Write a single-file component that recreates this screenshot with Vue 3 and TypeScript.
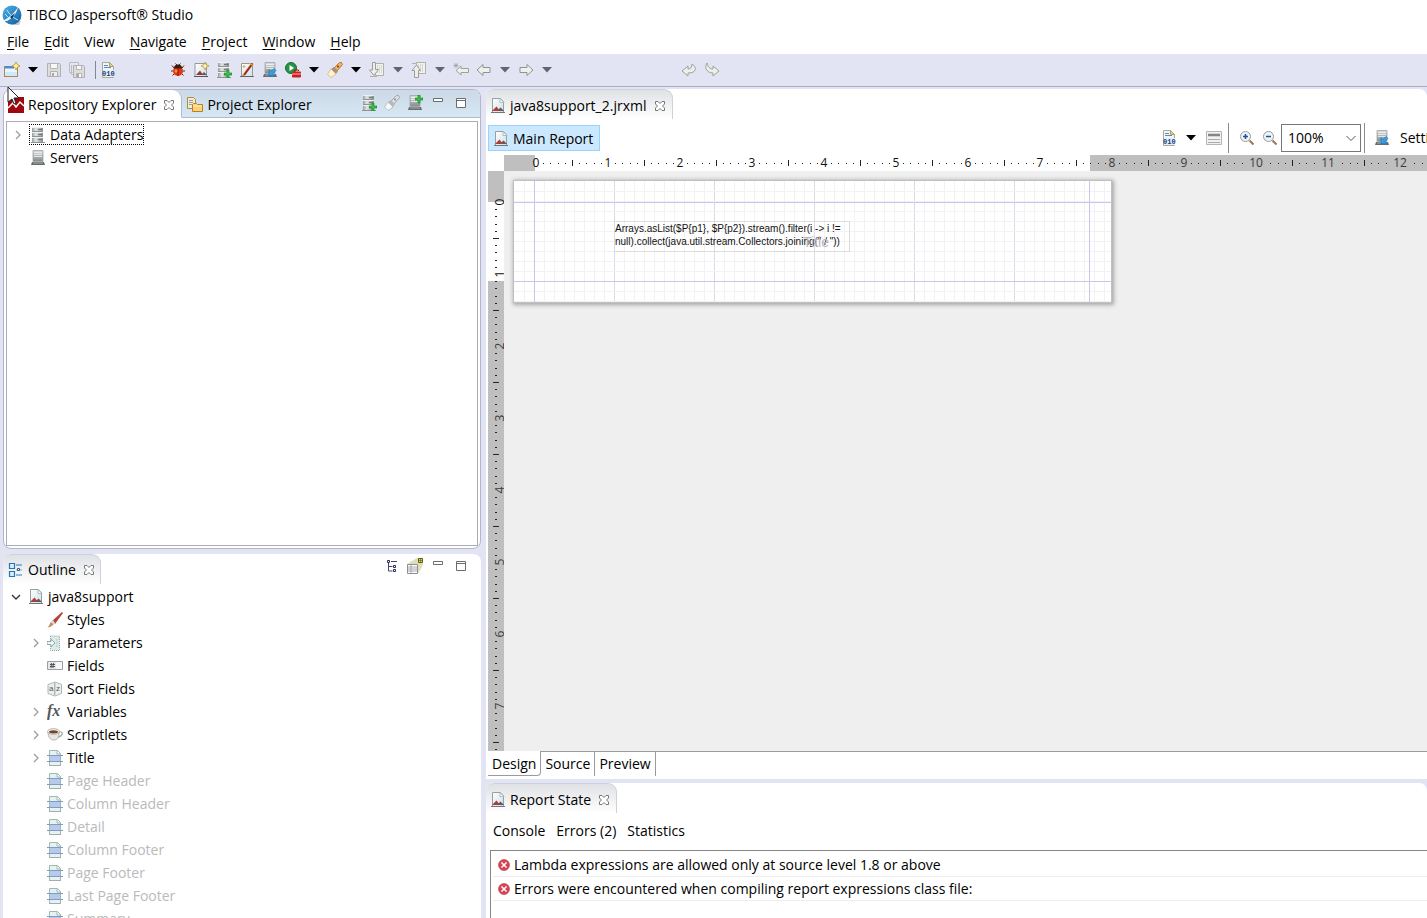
<script setup lang="ts">
import { onBeforeUnmount, onMounted, ref, computed } from 'vue'

interface Tool { kind: 'icon' | 'menu' | 'sep' | 'gap' | 'wide'; icon?: string; label?: string; off?: boolean }
interface Node { label: string; icon: string; child?: boolean; off?: boolean }

const menus = [
  { label: 'File', key: true },
  { label: 'Edit', key: true },
  { label: 'View', key: false },
  { label: 'Navigate', key: true },
  { label: 'Project', key: true },
  { label: 'Window', key: true },
  { label: 'Help', key: true },
]

const tools: Tool[] = [
  { kind: 'icon', icon: 'new', label: 'New' },
  { kind: 'menu', label: 'New menu' },
  { kind: 'icon', icon: 'save', label: 'Save', off: true },
  { kind: 'icon', icon: 'saveall', label: 'Save All', off: true },
  { kind: 'sep' },
  { kind: 'icon', icon: 'binary', label: 'Compile' },
  { kind: 'gap' },
  { kind: 'icon', icon: 'bug', label: 'Debug' },
  { kind: 'icon', icon: 'newreport', label: 'New Report' },
  { kind: 'icon', icon: 'dbadd', label: 'New Data Adapter' },
  { kind: 'icon', icon: 'wand', label: 'New Style' },
  { kind: 'icon', icon: 'serverlink', label: 'Publish' },
  { kind: 'icon', icon: 'run', label: 'Run' },
  { kind: 'menu', label: 'Run menu' },
  { kind: 'icon', icon: 'torch', label: 'Search' },
  { kind: 'menu', label: 'Search menu' },
  { kind: 'icon', icon: 'nextnote', label: 'Next Annotation', off: true },
  { kind: 'menu', label: 'Next Annotation menu', off: true },
  { kind: 'icon', icon: 'prevnote', label: 'Previous Annotation', off: true },
  { kind: 'menu', label: 'Previous Annotation menu', off: true },
  { kind: 'icon', icon: 'lastedit', label: 'Last Edit Location', off: true },
  { kind: 'icon', icon: 'back', label: 'Back', off: true },
  { kind: 'menu', label: 'Back menu', off: true },
  { kind: 'icon', icon: 'forward', label: 'Forward', off: true },
  { kind: 'menu', label: 'Forward menu', off: true },
  { kind: 'wide' },
  { kind: 'icon', icon: 'undo', label: 'Undo', off: true },
  { kind: 'icon', icon: 'redo', label: 'Redo', off: true },
]

const outline: Node[] = [
  { label: 'Styles', icon: 'brush' },
  { label: 'Parameters', icon: 'param', child: true },
  { label: 'Fields', icon: 'field' },
  { label: 'Sort Fields', icon: 'sort' },
  { label: 'Variables', icon: 'fx', child: true },
  { label: 'Scriptlets', icon: 'cup', child: true },
  { label: 'Title', icon: 'band', child: true },
  { label: 'Page Header', icon: 'band', off: true },
  { label: 'Column Header', icon: 'band', off: true },
  { label: 'Detail', icon: 'band', off: true },
  { label: 'Column Footer', icon: 'band', off: true },
  { label: 'Page Footer', icon: 'band', off: true },
  { label: 'Last Page Footer', icon: 'band', off: true },
  { label: 'Summary', icon: 'band', off: true },
]

const errors = [
  'Lambda expressions are allowed only at source level 1.8 or above',
  'Errors were encountered when compiling report expressions class file:',
]

const views = ['Design', 'Source', 'Preview']
const view = ref('Design')
const zoom = ref('100%')

// One ruler unit is an inch: 72 pixels at 100% zoom.
const INCH = 72
const range = (n: number) => Array.from({ length: Math.max(n, 0) }, (_, i) => i)
const marksFor = (units: number[]) =>
  units.flatMap((u) =>
    [1, 2, 3, 4, 5, 6, 7, 8, 9]
      .filter((k) => !(u >= 10 && k === 1) && !(u >= 9 && k === 9))
      .map((k) => ({ at: Math.round(u * INCH + (k * INCH) / 10), half: k === 5 })),
  )

const design = ref<HTMLElement>()
const size = ref({ w: 920, h: 596 })
const across = computed(() => range(Math.ceil((size.value.w - 56) / INCH)))
const down = computed(() => range(Math.ceil((size.value.h - 56) / INCH)))
const marksAcross = computed(() => marksFor(across.value))
const marksDown = computed(() => marksFor(down.value))

function measure() {
  if (design.value) size.value = { w: design.value.clientWidth, h: design.value.clientHeight }
}
onMounted(() => {
  measure()
  window.addEventListener('resize', measure)
})
onBeforeUnmount(() => window.removeEventListener('resize', measure))
</script>

<template>
  <svg class="sprite" aria-hidden="true">
    <defs>
      <linearGradient id="gBall" x1="0" y1="0" x2="1" y2="1"><stop offset="0" stop-color="#4db4ec" /><stop offset="1" stop-color="#145a9c" /></linearGradient>
      <linearGradient id="gSteel" x1="0" x2="1" y1="0" y2="0"><stop offset="0" stop-color="#989c9d" /><stop offset=".35" stop-color="#e3e6e6" /><stop offset="1" stop-color="#85898a" /></linearGradient>
      <linearGradient id="gServer" x1="0" x2="0" y1="0" y2="1"><stop offset="0" stop-color="#dadedf" /><stop offset="1" stop-color="#85898c" /></linearGradient>
      <linearGradient id="gPage" x1="0" x2="1" y1="0" y2="1"><stop offset="0" stop-color="#ffffff" /><stop offset="1" stop-color="#cfdfe2" /></linearGradient>
    </defs>
    <symbol id="logo" viewBox="0 0 20 20"><path d="M11 17l8-1-2 4H9z" fill="#c9c9c9" /><circle cx="10" cy="10" r="9.5" fill="url(#gBall)" /><path d="M1 16C6 13 12 9 16 2c-1 6-5 11-11 14z" fill="#e8f6ff" /><path d="M5 5c2 4 6 8 11 10M3 9l5 5" stroke="#bfe4fa" stroke-width="1" fill="none" /><path d="M8 12l5-4-3 6z" fill="#08365f" /></symbol>
    <symbol id="new" viewBox="0 0 16 16"><rect x=".5" y="4.500" width="13" height="10" fill="#eaf5fd" stroke="#a28d55" /><path d="M1 4h9v2.500H1z" fill="#4a8cd6" /><path d="M1 10h12v4H1z" fill="#d2e8f8" /><path d="M12 0l1.300 2.700L16 4l-2.700 1.300L12 8l-1.300-2.700L8 4l2.700-1.300z" fill="#fff3a5" stroke="#bd8b1e" stroke-width=".8" /></symbol>
    <symbol id="save" viewBox="0 0 16 16"><path d="M1.500 1.500h12l1 1v12h-13z" fill="#dcdcdb" stroke="#b0b1b2" /><path d="M4.500 1.500h7v5h-7z" fill="#f7f7f7" stroke="#b5b5b5" /><path d="M4.500 9.500h7v5h-7z" fill="#eee" stroke="#b0b0b0" /><path d="M6 11h2v3H6z" fill="#a8a8a8" /></symbol>
    <symbol id="saveall" viewBox="0 0 16 16"><path d="M.5.5h9v3M.5.5v10h3M2.500 3v9.500h2" fill="#e8e8e8" stroke="#bbb" /><path d="M4.500 3.500h10l1 1v11h-11z" fill="#dcdcdb" stroke="#b0b1b2" /><path d="M7.500 4v3.500h5V4M7.500 15v-3.500h5V15" fill="#f8f8f8" stroke="#b5b5b5" /><path d="M8 12h2v3H8z" fill="#a8a8a8" /></symbol>
    <symbol id="binary" viewBox="0 0 16 16"><path d="M2.500.5h7l4 4v11h-11z" fill="#eef4fb" stroke="#a9ad94" /><path d="M9.500.5v4h4z" fill="#e4d38f" stroke="#b3a15b" /><path d="M4 3.500h4M4 5.500h7" stroke="#6688bd" /><path d="M3 8h11v7H3z" fill="#e6eef8" /></symbol>
    <symbol id="bug" viewBox="0 0 16 16"><path d="M4 6L2 3.500M12 6l2-2.500M3 9H1M13 9h2M4 12l-1.500 1.500M12 12l1.500 1.500M7 3L5.500 1.500M9 3l1.500-1.500" stroke="#6e2211" /><ellipse cx="8" cy="9" rx="5" ry="5" fill="#e03a0c" /><path d="M4 6.500a4 4 0 018 0z" fill="#3c1a12" /><path d="M8 7v7" stroke="#7c1902" /><ellipse cx="6" cy="9" rx="1.500" ry="1.800" fill="#ff8b4a" /></symbol>
    <symbol id="report" viewBox="0 0 16 16"><path d="M2.500.5h8l3 3v11h-11z" fill="url(#gPage)" stroke="#8fa3a6" /><path d="M10 .5v4h4z" fill="#f5fafa" stroke="#9cb4b1" stroke-width=".8" /><path d="M2 13l4.500-4.500L10 13z" fill="#b33a3a" /><path d="M7 13l3.500-3.500L14 13z" fill="#6f5157" /><path d="M1 14.500h14" stroke="#6f7778" /></symbol>
    <symbol id="newreport" viewBox="0 0 16 16"><path d="M2 1.500h11.500v13H2z" fill="url(#gPage)" stroke="#8f9b9e" /><path d="M3 13l4-4.500 3 4.500z" fill="#9a3540" /><path d="M8 13l3-3 3 3z" fill="#6f5157" /><path d="M1 14.500h14" stroke="#555" /><path d="M12 0l1.200 2.800L16 4l-2.800 1.200L12 8l-1.200-2.800L8 4l2.800-1.200z" fill="#fff4b0" stroke="#b98c2b" stroke-width=".7" /></symbol>
    <symbol id="db" viewBox="0 0 16 16"><rect x="2" y="0" width="11" height="5" fill="url(#gSteel)" /><rect x="2" y="5" width="11" height="5" fill="url(#gSteel)" /><rect x="2" y="10" width="11" height="5" fill="url(#gSteel)" /><path d="M2 4.500h11M2 9.500h11" stroke="#8f9495" /><path d="M2 .5h11M2 5.500h11M2 10.500h11" stroke="#eff1f1" /><path d="M8 2.500h4M8 7.500h4M8 12.500h4" stroke="#747a7b" /><path d="M1 15.500h14" stroke="#8d9293" /></symbol>
    <symbol id="plus" viewBox="0 0 16 16"><path d="M3 0h2v3h3v2H5v3H3V5H0V3h3z" fill="#32c843" stroke="#14772a" stroke-width=".6" /></symbol>
    <symbol id="dbadd" viewBox="0 0 16 16"><use href="#db" width="16" height="16" /><use href="#plus" x="8" y="8" width="16" height="16" /></symbol>
    <symbol id="wand" viewBox="0 0 16 16"><path d="M2.500 1.500h11v13h-11z" fill="url(#gPage)" stroke="#919b9c" /><path d="M4 12.500L12.500 1l2 1L6 13.500z" fill="#a92c1d" /><path d="M2 15l2-3 2 1.500z" fill="#d39555" /><path d="M10.500 1.500l3.500 2M5 3v3M3.500 4.500h3" stroke="#e3b540" stroke-width="1.200" /><path d="M1 14.500h14" stroke="#525657" stroke-width=".8" /></symbol>
    <symbol id="server" viewBox="0 0 16 16"><path d="M3 .5h10v11H3z" fill="url(#gServer)" stroke="#a0a4a5" stroke-width=".8" /><path d="M4 2.500h8M4 4.500h8M4 6.500h8" stroke="#f4f5f5" stroke-width=".8" /><path d="M2 12h12l1 3H1z" fill="#676c6f" /><path d="M3 13h10" stroke="#a8adaf" /></symbol>
    <symbol id="serverlink" viewBox="0 0 16 16"><use href="#server" width="16" height="16" /><path d="M7 7.500v6h6l-2-2 3-3-2-2-3 3z" fill="#2fa2ea" stroke="#0d67b1" stroke-width=".5" /></symbol>
    <symbol id="serveradd" viewBox="0 0 16 16"><use href="#server" width="16" height="16" /><use href="#plus" x="8" y="0" width="16" height="16" /></symbol>
    <symbol id="run" viewBox="0 0 16 16"><circle cx="6" cy="6" r="5.500" fill="#239545" stroke="#14702c" /><path d="M4.500 3l4.500 3-4.500 3z" fill="#fff" /><rect x="7" y="9.500" width="9" height="6" rx="1" fill="#cf1e1e" /><path d="M9.500 9V8h4v1" fill="none" stroke="#a01212" /><path d="M7 12h9" stroke="#fff" stroke-width=".7" /></symbol>
    <symbol id="torch" viewBox="0 0 16 16"><path d="M7 6l5.500-5.500h2l1 2L10 9z" fill="#f5b35a" stroke="#a86623" stroke-width=".8" /><path d="M4 7l3-2 4 4-2 3z" fill="#a39089" /><path d="M.5 12L4 7l5 5-5 3.500z" fill="#fff3cd" stroke="#d2ad65" stroke-width=".7" /><circle cx="11" cy="4.500" r="1" fill="#6c3d13" /></symbol>
    <symbol id="torchoff" viewBox="0 0 16 16"><path d="M7 6l5.500-5.500h2l1 2L10 9z" fill="#dde1e2" stroke="#929798" stroke-width=".8" /><path d="M4 7l3-2 4 4-2 3z" fill="#b6babb" /><path d="M.5 12L4 7l5 5-5 3.500z" fill="#f7f8f8" stroke="#aaafb0" stroke-width=".7" /><circle cx="11" cy="4.500" r="1" fill="#888" /></symbol>
    <symbol id="nextnote" viewBox="0 0 16 16"><path d="M6.500 1.500h8v12h-8z" fill="#f2f2ed" stroke="#b0b0ad" /><path d="M8 4h5M8 6h5M8 8h5M8 10h5" stroke="#bbb" stroke-dasharray="1 1" /><path d="M3.500.5h3v7h3L5 13.500.5 8h3z" fill="#eeeeea" stroke="#9c9c99" /><path d="M1 14.500h7" stroke="#b0b0ad" /></symbol>
    <symbol id="prevnote" viewBox="0 0 16 16"><path d="M5.500.5h9v11h-9z" fill="#f2f2ed" stroke="#b0b0ad" /><path d="M7 3h6M7 5h6M7 7h6M7 9h6" stroke="#bbb" stroke-dasharray="1 1" /><path d="M3.500 15.500h4v-7h2L5.500 3 1 8.500h2.500z" fill="#eeeeea" stroke="#9c9c99" /><path d="M1 1.500h5" stroke="#b0b0ad" /></symbol>
    <symbol id="back" viewBox="0 0 16 16"><path d="M1 8l6-5.500v3h7v5H7v3z" fill="#f0f0ea" stroke="#929290" /></symbol>
    <symbol id="forward" viewBox="0 0 16 16"><path d="M15 8L9 2.500v3H2v5h7v3z" fill="#f0f0ea" stroke="#929290" /></symbol>
    <symbol id="lastedit" viewBox="0 0 16 16"><path d="M3 8.500L8 4v2.500h7.500v4H8V13z" fill="#f0f0ea" stroke="#a0a09d" /><path d="M3 1v5M.5 3.500h5M1 1.500l4 4M5 1.500l-4 4" stroke="#999" stroke-width=".7" /></symbol>
    <symbol id="undo" viewBox="0 0 16 16"><path d="M1 9l6-5v3c3 0 4-2 4-5 5 3 5 9-4 9v3z" fill="#efefe9" stroke="#a1a19e" /></symbol>
    <symbol id="redo" viewBox="0 0 16 16"><path d="M15 9L9 4v3C6 7 4 5 3 1c-3 5 0 10 6 10v3z" fill="#efefe9" stroke="#a1a19e" /></symbol>
    <symbol id="repo" viewBox="0 0 16 16"><path d="M0 0h16v16H0z" fill="#9f0710" /><path d="M0 11l5-5 3 4 4-5 4 4" fill="none" stroke="#fff" stroke-width="1.500" /><path d="M0 5l4-4" stroke="#d54c50" /></symbol>
    <symbol id="folder" viewBox="0 0 16 16"><path d="M.5.5h6l2 2v9h-8z" fill="#f5ebc6" stroke="#b08b48" /><path d="M2 3.500h4M2 5.500h4M2 7.500h3" stroke="#8fa0be" /><path d="M5.500 7.500l1-1h3l1 1h5v7h-10z" fill="#fbd278" stroke="#b6802a" /><path d="M6 9h9" stroke="#fff0bd" /></symbol>
    <symbol id="outline" viewBox="0 0 16 16"><path d="M1.500 1.500h5v5h-5zM1.500 9.500h5v5h-5z" fill="#d9edfb" stroke="#2478b5" stroke-width="1.200" /><path d="M8 3h6M8 13h6" stroke="#2478b5" /><path d="M8 8h6" stroke="#76a9cf" /><path d="M9.500 6.500h2v2h-2z" fill="#fff" stroke="#2a5c93" /></symbol>
    <symbol id="close" viewBox="0 0 12 12"><path d="M1.500 1.500H4l2 2 2-2h2.500V4l-2 2 2 2v2.500H8l-2-2-2 2H1.500V8l2-2-2-2z" fill="#fff" stroke="#777" /></symbol>
    <symbol id="min" viewBox="0 0 12 12"><path d="M1.500 1.500h9v3h-9z" fill="#fff" stroke="#6a6d70" /></symbol>
    <symbol id="max" viewBox="0 0 12 12"><path d="M1.500 1.500h9v9h-9zM1 3.500h10" fill="#fff" stroke="#6a6d70" /></symbol>
    <symbol id="treeview" viewBox="0 0 16 16"><path d="M4.500 5v8h4M4.500 8.500h4M7 3.500h6" stroke="#44456f" fill="none" /><path d="M3.500 2.500h2v2h-2zM9.500 7.500h2v2h-2zM9.500 11.500h2v2h-2z" fill="#fff" stroke="#272c63" /></symbol>
    <symbol id="preview" viewBox="0 0 16 16"><path d="M0 6L10 0h6v7l-5 9z" fill="#dcdfbe" /><path d="M.5 6.500h10v9H.5z" fill="#fff" stroke="#8d8f91" /><path d="M1 9h9M1 11h9M1 13h9M4 7v8" stroke="#a5a7a9" /><path d="M11.500.5h4v4h-4z" fill="#e7dc46" stroke="#5f5b1c" /><path d="M13.500 1v3M12 2.500h3" stroke="#5f5b1c" stroke-width=".6" /></symbol>
    <symbol id="brush" viewBox="0 0 16 16"><path d="M5 9L15 0l1 1-8 11z" fill="#b4443b" /><path d="M4 10l2-2 2 3-2 2z" fill="#d9d9d9" /><path d="M0 15.500C3 14 2 12 4 10l2.500 2.500C4 15 3 15 0 15.500z" fill="#c38f5d" /></symbol>
    <symbol id="param" viewBox="0 0 16 16"><path d="M3.500 1h9v14.500h-9z" fill="#dceae8" stroke="#8fa9a7" stroke-dasharray="1 1" /><path d="M0 6.500h4V4l4 4-4 4V9.500H0z" fill="#f2f6f6" stroke="#89a3a3" stroke-width=".9" /><path d="M9 5h2M9 8h2M9 11h2" stroke="#b4c6c4" /></symbol>
    <symbol id="field" viewBox="0 0 16 16"><path d="M.5 3.500h15v8H.5z" fill="#e5e8ea" stroke="#9aa0a2" /><path d="M9 4h6v7H9z" fill="#f8f8f8" /><path d="M4.500 5L4 10M6.500 5L6 10M3 6.500h5M3 8.500h5" stroke="#494d50" stroke-width=".9" /></symbol>
    <symbol id="sort" viewBox="0 0 16 16"><path d="M1 3.500L8 1l6.500 2.500v9L8 15l-7-2.500z" fill="#edf0f0" stroke="#aeb4b5" /><path d="M7.800 2v12" stroke="#999" /></symbol>
    <symbol id="cup" viewBox="0 0 16 16"><path d="M1 5c0 5 2 8 6 8s5-3 5-8z" fill="#e8e7e3" stroke="#a5a4a0" stroke-width=".8" /><ellipse cx="6.500" cy="4.500" rx="6" ry="2.800" fill="#f7f6f1" stroke="#a19e99" stroke-width=".8" /><ellipse cx="6.500" cy="4.800" rx="4.500" ry="1.600" fill="#744423" /><path d="M12 5c5-1 4 4-1 5" fill="none" stroke="#b0afab" stroke-width="1.300" /></symbol>
    <symbol id="band" viewBox="0 0 16 16"><path d="M2.500.5h8l3 3v12h-11z" fill="#e6f1f0" stroke="#9cb9b2" /><path d="M10 1v3h3.500" fill="#fff" stroke="#89aca2" stroke-width=".8" /><path d="M3 6h10v5H3z" fill="#b7c9ec" /><path d="M0 5.500h16M0 11.500h16" stroke="#7f9cc4" /><path d="M2 15.500h12" stroke="#a0adb2" /></symbol>
    <symbol id="error" viewBox="0 0 12 12"><circle cx="6" cy="6" r="5.500" fill="#d94351" stroke="#c05a60" stroke-width=".8" /><path d="M3.500 3.500l5 5M8.500 3.500l-5 5" stroke="#fff" stroke-width="1.500" /></symbol>
    <symbol id="form" viewBox="0 0 16 16"><path d="M.5 1.500h15v13H.5z" fill="#f0f1f1" stroke="#b4b5b5" /><path d="M2 5h12" stroke="#858585" stroke-width="2.500" /><path d="M2 9.500h12M2 12.500h12" stroke="#aaa" /></symbol>
    <symbol id="zoomin" viewBox="0 0 16 16"><circle cx="6.500" cy="6.500" r="5" fill="#edf4fc" stroke="#9b9b91" /><path d="M10.500 10.500l4 4" stroke="#94785a" stroke-width="2" /><path d="M6.500 4v5M4 6.500h5" stroke="#2450a0" stroke-width="1.600" /></symbol>
    <symbol id="zoomout" viewBox="0 0 16 16"><circle cx="6.500" cy="6.500" r="5" fill="#edf4fc" stroke="#9b9b91" /><path d="M10.500 10.500l4 4" stroke="#94785a" stroke-width="2" /><path d="M4 6.500h5" stroke="#2450a0" stroke-width="1.600" /></symbol>
    <symbol id="down" viewBox="0 0 10 6"><path d="M0 0h10L5 5.500z" fill="currentColor" /></symbol>
    <symbol id="closed" viewBox="0 0 10 10"><path d="M3 1l4 4-4 4" fill="none" stroke="#9d9d9d" stroke-width="1.300" /></symbol>
    <symbol id="opened" viewBox="0 0 10 10"><path d="M1 3l4 4 4-4" fill="none" stroke="#3f3f3f" stroke-width="1.500" /></symbol>
    <symbol id="chevron" viewBox="0 0 10 10"><path d="M.5 3L5 7.500 9.500 3" fill="none" stroke="#555" /></symbol>
  </svg>

  <div class="app">
    <header class="title"><svg class="logo"><use href="#logo" /></svg><span>TIBCO Jaspersoft® Studio</span></header>
    <nav class="menu">
      <button v-for="m in menus" :key="m.label"><template v-if="m.key"><u>{{ m.label[0] }}</u>{{ m.label.slice(1) }}</template><template v-else>{{ m.label }}</template></button>
    </nav>
    <div class="toolbar">
      <template v-for="(t, i) in tools" :key="i">
        <button v-if="t.kind === 'icon'" class="tool" :aria-label="t.label" :disabled="t.off">
          <svg class="i16"><use :href="'#' + t.icon" /><text v-if="t.icon === 'binary'" class="bits" x="2" y="14">010</text></svg>
        </button>
        <button v-else-if="t.kind === 'menu'" class="drop" :aria-label="t.label" :disabled="t.off"><svg class="caret"><use href="#down" /></svg></button>
        <span v-else :class="t.kind"></span>
      </template>
    </div>

    <main class="body">
      <div class="left">
        <section class="pane repo">
          <div class="tabs blue">
            <button class="tab current"><svg class="i16"><use href="#repo" /></svg>Repository Explorer<svg class="i12"><use href="#close" /></svg></button>
            <button class="tab"><svg class="i16"><use href="#folder" /></svg>Project Explorer</button>
            <div class="actions">
              <button aria-label="Create Data Adapter"><svg class="i16"><use href="#dbadd" /></svg></button>
              <button aria-label="Search"><svg class="i16"><use href="#torchoff" /></svg></button>
              <button aria-label="Create Server"><svg class="i16"><use href="#serveradd" /></svg></button>
              <button aria-label="Minimize"><svg class="i12"><use href="#min" /></svg></button>
              <button aria-label="Maximize"><svg class="i12"><use href="#max" /></svg></button>
            </div>
          </div>
          <ul class="tree boxed">
            <li><svg class="twist"><use href="#closed" /></svg><span class="focus"><svg class="i16"><use href="#db" /></svg>Data Adapters</span></li>
            <li><span class="twist"></span><span class="plain"><svg class="i16"><use href="#server" /></svg>Servers</span></li>
          </ul>
        </section>

        <section class="pane outline">
          <div class="tabs">
            <button class="tab gray"><svg class="i16"><use href="#outline" /></svg>Outline<svg class="i12"><use href="#close" /></svg></button>
            <div class="actions">
              <button aria-label="Outline"><svg class="i16"><use href="#treeview" /></svg></button>
              <button aria-label="Preview"><svg class="i16"><use href="#preview" /></svg></button>
              <button aria-label="Minimize"><svg class="i12"><use href="#min" /></svg></button>
              <button aria-label="Maximize"><svg class="i12"><use href="#max" /></svg></button>
            </div>
          </div>
          <ul class="tree">
            <li><svg class="twist"><use href="#opened" /></svg><span class="plain"><svg class="i16"><use href="#report" /></svg>java8support</span></li>
            <li v-for="n in outline" :key="n.label" class="sub" :class="{ off: n.off }">
              <svg class="twist"><use v-if="n.child" href="#closed" /></svg>
              <span class="plain">
                <svg class="i16">
                  <text v-if="n.icon === 'fx'" class="fx" x="0" y="12">fx</text>
                  <use v-else :href="'#' + n.icon" />
                  <template v-if="n.icon === 'sort'"><text class="az" x="2" y="10">a</text><text class="az" x="9" y="10">z</text></template>
                </svg>{{ n.label }}
              </span>
            </li>
          </ul>
        </section>
      </div>

      <div class="right">
        <section class="pane editor">
          <div class="tabs">
            <button class="tab gray"><svg class="i16"><use href="#report" /></svg>java8support_2.jrxml<svg class="i12"><use href="#close" /></svg></button>
          </div>
          <div class="bar">
            <button class="crumb"><svg class="i16"><use href="#report" /></svg>Main Report</button>
            <div class="bartools">
              <button class="tool" aria-label="Compile Report"><svg class="i16"><use href="#binary" /><text class="bits" x="2" y="14">010</text></svg></button>
              <button class="drop" aria-label="Compile menu"><svg class="caret"><use href="#down" /></svg></button>
              <button class="tool" aria-label="Dataset"><svg class="i16"><use href="#form" /></svg></button>
              <span class="line"></span>
              <button class="tool" aria-label="Zoom In"><svg class="i16"><use href="#zoomin" /></svg></button>
              <button class="tool" aria-label="Zoom Out"><svg class="i16"><use href="#zoomout" /></svg></button>
              <label class="zoom">
                <select v-model="zoom" aria-label="Zoom level"><option>100%</option><option>200%</option></select>
                <svg class="chev"><use href="#chevron" /></svg>
              </label>
              <span class="line"></span>
              <button class="settings"><svg class="i16"><use href="#serverlink" /></svg>Settings</button>
            </div>
          </div>
          <div ref="design" class="design">
            <svg class="hruler">
              <rect width="100%" height="16" fill="#bfbfbf" />
              <rect x="31" width="555" height="16" fill="#fff" />
              <g transform="translate(32 0)">
                <rect v-for="m in marksAcross" :key="m.at" :x="m.at" :y="m.half ? 5 : 8" width="1" :height="m.half ? 6 : 1" fill="#222" />
                <text v-for="u in across" :key="u" :x="u * INCH" y="12" text-anchor="middle" class="num" :class="{ dim: u > 7 }">{{ u }}</text>
              </g>
            </svg>
            <svg class="vruler">
              <rect width="16" height="100%" fill="#bfbfbf" />
              <rect y="31" width="16" height="79" fill="#fff" />
              <g transform="translate(0 31)">
                <rect v-for="m in marksDown" :key="m.at" :y="m.at" :x="m.half ? 5 : 7" height="1" :width="m.half ? 6 : 2" fill="#222" />
                <text v-for="u in down" :key="u" :transform="`translate(16 ${u * INCH}) rotate(-90)`" text-anchor="middle" class="num" :class="{ dim: u > 1 }">{{ u }}</text>
              </g>
            </svg>
            <div class="canvas">
              <div class="page">
                <svg class="grid">
                  <path v-for="x in 59" :key="'v' + x" :d="`M${x * 10 + 0.5} 0v121`" :stroke="x % 10 ? '#f2f2f4' : '#dadae4'" />
                  <path v-for="y in 12" :key="'h' + y" :d="`M0 ${y * 10 + 0.5}h597`" :stroke="y % 10 ? '#f2f2f4' : '#e4e4ea'" />
                  <path d="M20.500 0v121M575.500 0v121M0 21.500h597M0 100.500h597" stroke="#c9c6ec" />
                </svg>
                <div class="field"><span class="ghost">Title</span>Arrays.asList($P{p1}, $P{p2}).stream().filter(i -&gt; i != null).collect(java.util.stream.Collectors.joining(" / "))</div>
              </div>
            </div>
          </div>
          <div class="views">
            <button v-for="v in views" :key="v" :class="{ on: v === view }" @click="view = v">{{ v }}</button>
          </div>
        </section>

        <section class="pane state">
          <div class="tabs">
            <button class="tab gray"><svg class="i16"><use href="#report" /></svg>Report State<svg class="i12"><use href="#close" /></svg></button>
          </div>
          <nav class="links"><button>Console</button><button>Errors (2)</button><button>Statistics</button></nav>
          <ul class="errors">
            <li v-for="e in errors" :key="e"><svg class="i12"><use href="#error" /></svg>{{ e }}</li>
          </ul>
        </section>
      </div>
    </main>

    <svg class="pointer" viewBox="0 0 14 20"><path d="M1 1v15l4-3 2 5 2-1-2-5h5z" fill="#fff" stroke="#222" /></svg>
  </div>
</template>

<style>
body { margin: 0; overflow: hidden; }
</style>

<style scoped>
.sprite { position: absolute; width: 0; height: 0; }
.app { height: 100vh; display: flex; flex-direction: column; overflow: hidden; background: #fff; color: #000; font: 14px/20px "Open Sans", "Noto Sans", sans-serif; white-space: nowrap; }
button { font: inherit; color: inherit; background: none; border: 0; padding: 0; margin: 0; }
svg { flex: none; display: block; }
ul { list-style: none; margin: 0; padding: 0; }
.i16 { width: 16px; height: 16px; }
.i12 { width: 12px; height: 12px; }
.bits { font: 700 7px "Liberation Mono", monospace; fill: #1b3d77; }
.az { font: 8px "Liberation Sans", sans-serif; fill: #54585a; }
.fx { font: italic 700 16px "Liberation Serif", serif; fill: #55595b; }
.title { flex: none; height: 28px; display: flex; align-items: center; gap: 5px; padding: 1px 0 0 2px; box-sizing: border-box; }
.logo { width: 20px; height: 20px; }
.menu { flex: none; height: 26px; display: flex; align-items: center; gap: 15px; padding: 2px 0 0 7px; box-sizing: border-box; }
.menu u { text-underline-offset: 2px; }
.toolbar { flex: none; height: 32px; display: flex; align-items: center; background: #e2e4f4; border-bottom: 1px solid #a9adc0; }
.tool { width: 23px; height: 24px; display: flex; align-items: center; justify-content: center; }
.drop { width: 19px; height: 24px; display: flex; align-items: center; justify-content: center; }
.drop:disabled { color: #63646c; }
.caret { width: 10px; height: 6px; }
.sep { width: 8px; height: 18px; box-sizing: border-box; border-right: 1px solid #858794; }
.gap { width: 47px; }
.wide { width: 121px; }
.body { flex: 1; min-height: 0; display: flex; gap: 5px; padding: 2px 0 0 3px; background: #e2e4f4; }
.left { flex: 0 0 478px; display: flex; flex-direction: column; gap: 5px; min-height: 0; }
.right { flex: 1; min-width: 0; display: flex; flex-direction: column; gap: 4px; }
.pane { display: flex; flex-direction: column; min-height: 0; background: #fff; border-radius: 8px 8px 0 0; overflow: hidden; box-sizing: border-box; }
.repo { flex: 459; border: 1px solid #b3b7ca; border-radius: 8px; }
.outline { flex: 365; }
.tabs { flex: none; height: 30px; display: flex; align-items: stretch; }
.tab { display: flex; align-items: center; gap: 4px; padding: 3px 5px 1px; }
.tab .i12:last-child { margin-left: 3px; }
.tabs.blue { height: 28px; background: linear-gradient(#ccd9e8, #d7e7f3); }
.blue .tab { border-bottom: 1px solid #b0bccd; padding-top: 4px; }
.blue .current { background: #fff; border-bottom-color: #fff; border-right: 1px solid #b0bccd; border-radius: 0 9px 0 0; padding-left: 4px; padding-right: 6px; }
.gray { background: linear-gradient(#dfe1e5, #fff); border: 1px solid #cfd1d8; border-bottom: 0; border-left: 0; border-radius: 8px 9px 0 0; }
.right .gray { padding-left: 4px; padding-right: 6px; }
.actions { flex: 1; display: flex; justify-content: flex-end; align-items: center; padding: 0 12px 6px 0; gap: 7px; }
.blue .actions { border-bottom: 1px solid #b0bccd; padding-bottom: 2px; padding-right: 11px; }
.actions .i12 { width: 16px; height: 12px; }
.tree { flex: 1; min-height: 0; overflow: hidden; padding-top: 2px; }
.boxed { margin: 3px 2px 2px; border: 1px solid #a9adb3; padding-top: 1px; }
.tree li { height: 23px; display: flex; align-items: center; padding-left: 7px; }
.boxed li { padding-left: 5px; }
.tree .twist { flex: none; width: 10px; height: 10px; margin: 0 6px 0 1px; }
.tree .sub { padding-left: 27px; }
.tree .sub .twist { margin-right: 5px; }
.plain, .focus { display: flex; align-items: center; gap: 4px; height: 21px; border: 1px solid transparent; }
.focus { border: 1px dotted #000; box-sizing: border-box; }
.off { color: #bababa; }
.editor { flex: 1; }
.bar { flex: none; height: 36px; display: flex; justify-content: space-between; align-items: center; padding: 2px 0 0 2px; box-sizing: border-box; }
.crumb { height: 26px; box-sizing: border-box; display: flex; align-items: center; gap: 4px; padding: 2px 6px 0 4px; background: #cce8ff; border: 1px solid #99d1ff; }
.bartools { flex: none; width: 270px; display: flex; align-items: center; overflow: hidden; }
.line { flex: none; width: 1px; height: 30px; background: #8b8b8b; margin: 0 6px 0 3px; }
.bartools .tool, .bartools .drop { flex: none; }
.bartools .drop { width: 22px; }
.zoom { flex: none; display: flex; align-items: center; width: 80px; height: 28px; box-sizing: border-box; border: 1px solid #777; padding: 0 4px 0 6px; }
.zoom select { appearance: none; border: 0; background: none; font: inherit; color: inherit; padding: 0; flex: 1; min-width: 0; }
.chev { width: 10px; height: 10px; }
.settings { display: flex; align-items: center; gap: 10px; padding-left: 3px; }
.design { flex: 1; min-height: 0; display: grid; grid-template: 16px minmax(0, 1fr) / 16px minmax(0, 1fr); padding-left: 2px; }
.hruler { grid-area: 1 / 2; width: 100%; height: 16px; }
.vruler { grid-area: 2 / 1; width: 16px; height: 100%; overflow: hidden; }
.num { font-size: 12px; fill: #111; }
.dim { fill: #3c3c3c; }
.canvas { grid-area: 2 / 2; background: #efefef; padding: 10px; overflow: hidden; }
.page { position: relative; width: 597px; height: 121px; background: #fff; box-shadow: 0 0 0 1px #c0c0c0, 1px 1px 4px 2px #a8a8a8; }
.grid { width: 100%; height: 100%; }
.field { position: absolute; left: 100px; top: 40px; width: 236px; height: 31px; box-sizing: border-box; border: 1px solid #dcdcdc; font: 10px/13px "Liberation Sans", Arial, sans-serif; white-space: normal; color: #111; }
.ghost { position: absolute; right: 20px; top: 12px; font-size: 14px; line-height: 16px; color: #b9b9b9; }
.views { flex: none; height: 28px; display: flex; align-items: flex-start; border-top: 1px solid #9b9b9b; margin-left: 2px; box-sizing: border-box; }
.views button { height: 24px; padding: 0 4px; border-right: 1px solid #9b9b9b; }
.views .on { margin-top: -1px; height: 25px; padding-top: 1px; background: #fff; border-bottom: 1px solid #9b9b9b; border-radius: 0 0 4px 0; }
.state { flex: 0 0 135px; }
.links { flex: none; height: 37px; display: flex; align-items: center; gap: 11px; padding: 0 0 2px 7px; box-sizing: border-box; }
.errors { flex: 1; margin-left: 4px; border: solid #858585; border-width: 1px 0 0 1px; padding: 2px 0 0 2px; }
.errors li { height: 24px; box-sizing: border-box; border-bottom: 1px solid #ededed; display: flex; align-items: center; gap: 4px; padding-left: 5px; }
.pointer { position: absolute; left: 7px; top: 86px; width: 14px; height: 20px; }
</style>
